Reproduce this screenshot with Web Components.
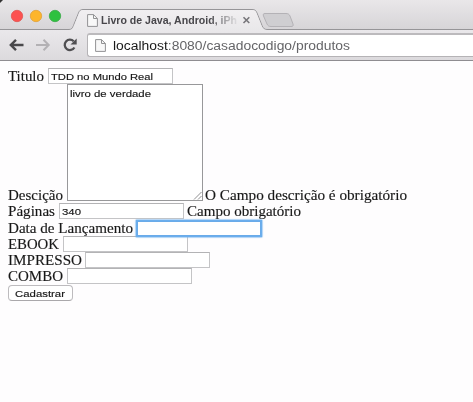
<!DOCTYPE html>
<html lang="pt-BR">
<head>
<meta charset="utf-8">
<title>Livro de Java, Android, iPhone</title>
<style>
html,body{margin:0;width:473px;height:402px;overflow:hidden;background:#fefdfe}
</style>
</head>
<body>
<browser-window>
  <tab-strip slot="tabs"><fit-text width="136">Livro de Java, Android, iPh</fit-text></tab-strip>
  <tool-bar slot="toolbar"><fit-text width="237"><b style="font-weight:400;color:#191919">localhost</b>:8080/casadocodigo/produtos</fit-text></tool-bar>
  <product-form></product-form>
</browser-window>
<script>
const mount = (el, html) => { el.attachShadow({mode:'open'}).innerHTML = html; };

// One line of text, stretched to an exact width.
class FitText extends HTMLElement {
  connectedCallback(){
    if (this.shadowRoot) return;
    mount(this, `<style>:host{display:inline-block;flex:none;white-space:nowrap}span{display:inline-block;white-space:pre;transform-origin:0 50%}</style><span><slot></slot></span>`);
    requestAnimationFrame(() => this.fit());
  }
  fit(){
    const s = this.shadowRoot.querySelector('span'), w = +this.getAttribute('width');
    s.style.transform = `scaleX(${w / s.getBoundingClientRect().width})`;
    this.style.width = w + 'px';
  }
}

class BrowserWindow extends HTMLElement {
  connectedCallback(){
    mount(this, `<style>:host{display:flex;flex-direction:column;width:473px;height:402px;background:#fefdfe}</style>
    <slot name="tabs"></slot><slot name="toolbar"></slot><slot></slot>`);
  }
}

class PageIcon extends HTMLElement {
  connectedCallback(){
    mount(this, `<style>:host{display:block;flex:none;width:11px;height:13px}svg{display:block}</style>
    <svg width="11" height="13" viewBox="0 0 11 13"><path d="M.6.6H6.5L10.4 4.5V12.4H.6Z" fill="#f8f8f8" stroke="#929294"/><path d="M6.5.6V4.5H10.4" fill="none" stroke="#929294"/></svg>`);
  }
}

class TabStrip extends HTMLElement {
  connectedCallback(){
    mount(this, `<style>
    :host{display:grid;height:30px;flex:none;background:linear-gradient(#e9e7e9,#d6d4d7)}
    svg,.row{grid-area:1/1}
    svg{display:block}
    .row{display:flex;align-items:center;height:22px;margin-top:9px;padding-left:87px;font:bold 10.5px/14px "Liberation Sans",Arial,sans-serif;color:#48474b}
    .title{margin-left:3px;width:138px;overflow:hidden;-webkit-mask-image:linear-gradient(90deg,#000 108px,transparent 138px);mask-image:linear-gradient(90deg,#000 108px,transparent 138px)}
    </style>
    <svg width="473" height="30" viewBox="0 0 473 30">
      <defs><linearGradient id="t" x2="0" y2="1"><stop stop-color="#f1eff1"/><stop offset="1" stop-color="#e9e8ea"/></linearGradient></defs>
      <path d="M0 0H3L0 3Z" fill="#333"/>
      <path d="M0 29.5H69C72 29.5 72.500 28 73.500 25.500L78.500 13C79.500 10.500 80.500 9.500 83 9.500H252C255 9.500 256 10.500 257 13L262 25.500C263 28 264 29.500 267 29.500H473" fill="none" stroke="#969598"/>
      <path d="M69 30C72 30 73 28 74 25.500L79 13C80 11 81 10 83 10H252C255 10 255.500 11 256.500 13L261.500 25.500C262.500 28 264 30 267 30Z" fill="url(#t)"/>
      <path d="M265 13.500H286C288 13.500 289 14 290 16L293 24C293.500 26 293 26.500 291 26.500H271C269 26.500 268 26 267 24L263.500 16C263 14.500 263 13.500 265 13.500Z" fill="#cfced1" stroke="#b4b2b6"/>
      <g stroke-width=".8"><circle cx="17" cy="16" r="5.700" fill="#fc5150" stroke="#df5552"/><circle cx="36" cy="16" r="5.700" fill="#fdb52b" stroke="#dfa13b"/><circle cx="55" cy="16" r="5.700" fill="#2ec13f" stroke="#3aa948"/></g>
      <path d="M243.500 17.200L249.300 23M249.300 17.200L243.500 23" stroke="#77767a" stroke-width="1.600"/>
    </svg>
    <div class="row"><page-icon></page-icon><div class="title"><slot></slot></div></div>`);
  }
}

class ToolBar extends HTMLElement {
  connectedCallback(){
    mount(this, `<style>
    :host{display:flex;box-sizing:border-box;height:31px;flex:none;background:linear-gradient(#eae8eb,#dcdadd);border-bottom:1px solid #8f8d91}
    .nav{display:block;flex:none;width:87px;height:30px}
    .box{flex:1;display:flex;align-items:center;box-sizing:border-box;height:24px;margin-top:3px;padding-left:7px;background:#fff;border:1px solid #b5b3b6;border-top:2px solid #bcbabd;border-right:0;border-radius:3px 0 0 3px;font:13.700px/18px "Liberation Sans",Arial,sans-serif;color:#656568}
    ::slotted(fit-text){margin-left:7px}
    </style>
    <svg class="nav" viewBox="0 0 87 30" fill="none">
      <path d="M23.500 15H11M16 9.800L10.800 15L16 20.200" stroke="#49484b" stroke-width="2.400"/>
      <path d="M36 15H48.500M43.500 9.800L48.700 15L43.500 20.200" stroke="#b3b1b4" stroke-width="2"/>
      <path d="M73.700 11.300A5.200 5.200 0 1 0 74.400 17.500" stroke="#504f52" stroke-width="2.300"/>
      <path d="M76.700 8.500V14.500H70.500Z" fill="#504f52"/>
    </svg>
    <div class="box"><page-icon></page-icon><slot></slot></div>`);
  }
}

class FormRow extends HTMLElement {
  connectedCallback(){
    mount(this, `<style>:host{display:flex;height:16.200px;font:14.500px/16px "Liberation Serif","Times New Roman",serif;color:#171717;-webkit-text-stroke:.15px #222;align-items:flex-end}</style><slot></slot>`);
  }
}

class TextBox extends HTMLElement {
  connectedCallback(){
    mount(this, `<style>
    :host{display:block;flex:none;box-sizing:border-box;width:125px;height:16px;border:1px solid #c4c4c6;border-top-color:#b3b3b5;background:#fff;padding-left:2px;font:9.700px/16px "Liberation Sans",Arial,sans-serif;color:#111;-webkit-text-stroke:.15px #222}
    :host([focused]){width:124px;position:relative;height:15px;border-color:#6aabe9;box-shadow:0 0 0 1.300px #6baeed,0 0 2px 1px #8fc2ee}
    :host([multiline]){position:relative;width:136px;height:117px;border-color:#98989a;line-height:17px}
    svg{display:none}
    :host([multiline]) svg{display:block;position:absolute;right:0;bottom:0}
    </style><slot></slot><svg width="9" height="9"><path d="M1 8.500L8.500 1M5 8.500L8.500 5" stroke="#858587" stroke-width=".9"/></svg>`);
  }
}

class PushButton extends HTMLElement {
  connectedCallback(){
    mount(this, `<style>:host{display:flex;box-sizing:border-box;justify-content:center;width:65px;height:16px;margin:1px 0 0 -.500px;border:1px solid #bdbbbe;border-bottom-color:#aaa8ab;border-radius:4px;background:#fff;font:9.700px/16px "Liberation Sans",Arial,sans-serif;color:#111;-webkit-text-stroke:.15px #222}</style><slot></slot>`);
  }
}

class ProductForm extends HTMLElement {
  connectedCallback(){
    mount(this, `<style>
    :host{display:block;padding:7px 0 0 8px}
    .g{margin-left:var(--g,4px)}
    </style>
    <form-row><fit-text width="36">Titulo</fit-text><text-box class="g"><fit-text width="102">TDD no Mundo Real</fit-text></text-box></form-row>
    <form-row style="height:119px"><fit-text width="55">Descição</fit-text><text-box multiline class="g" style="align-self:flex-start"><fit-text width="81">livro de verdade</fit-text></text-box><fit-text width="202" style="margin-left:2px">O Campo descrição é obrigatório</fit-text></form-row>
    <form-row><fit-text width="47">Páginas</fit-text><text-box class="g"><fit-text width="19">340</fit-text></text-box><fit-text width="114" style="margin-left:3px">Campo obrigatório</fit-text></form-row>
    <form-row><fit-text width="125">Data de Lançamento</fit-text><text-box focused class="g"></text-box></form-row>
    <form-row><fit-text width="51">EBOOK</fit-text><text-box class="g"></text-box></form-row>
    <form-row><fit-text width="74">IMPRESSO</fit-text><text-box class="g" style="--g:3px"></text-box></form-row>
    <form-row><fit-text width="55">COMBO</fit-text><text-box class="g"></text-box></form-row>
    <push-button><fit-text width="50">Cadastrar</fit-text></push-button>`);
  }
}

const elements = {'fit-text':FitText,'page-icon':PageIcon,'form-row':FormRow,'text-box':TextBox,'push-button':PushButton,
  'tab-strip':TabStrip,'tool-bar':ToolBar,'product-form':ProductForm,'browser-window':BrowserWindow};
for (const [name, cls] of Object.entries(elements)) customElements.define(name, cls);
</script>
</body>
</html>
